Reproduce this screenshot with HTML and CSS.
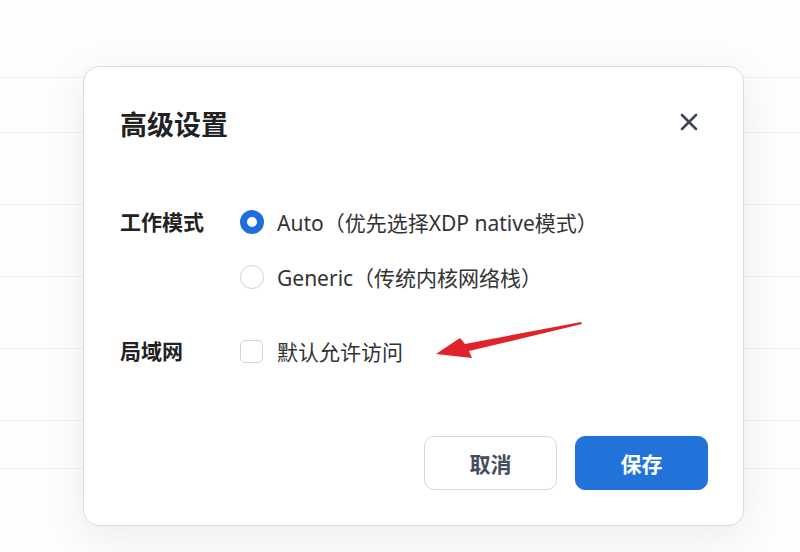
FILE: index.html
```html
<!DOCTYPE html>
<html lang="zh-CN">
<head>
    <meta charset="UTF-8">
    <meta name="viewport" content="width=device-width, initial-scale=1.0">
    <title>高级设置</title>
    <link rel="stylesheet" href="styles.css">
</head>
<body>
    <div class="table-bg">
        <div class="row row-head"></div>
        <div class="row row-sm"></div>
        <div class="row"></div>
        <div class="row"></div>
        <div class="row"></div>
        <div class="row"></div>
        <div class="row row-end"></div>
    </div>

    <div class="modal">
        <div class="modal-head">
            <h1>高级设置</h1>
            <button class="close" aria-label="关闭">
                <svg width="18" height="18" viewBox="0 0 18 18"><path d="M2 2 L16 16 M16 2 L2 16" stroke="#3d4659" stroke-width="2.6" stroke-linecap="round"/></svg>
            </button>
        </div>

        <div class="field field-mode">
            <div class="label">工作模式</div>
            <div class="options">
                <label class="option"><span class="radio checked"></span>Auto（优先选择XDP native模式）</label>
                <label class="option"><span class="radio"></span>Generic（传统内核网络栈）</label>
            </div>
        </div>

        <div class="field field-lan">
            <div class="label">局域网</div>
            <div class="options">
                <label class="option"><span class="checkbox"></span>默认允许访问</label>
            </div>
        </div>

        <div class="modal-foot">
            <button class="btn btn-cancel">取消</button>
            <button class="btn btn-save">保存</button>
        </div>

        <svg class="arrow" width="150" height="40" viewBox="0 0 150 40">
            <polygon points="146,1 147,3 34,30 37,37 1,33 25,17 30,23" fill="#e0222a"/>
        </svg>
    </div>
</body>
</html>
```

FILE: styles.css
```css
* { box-sizing: border-box; }
body { margin: 0; background: #fdfdfd; font-family: "Noto Sans", "Noto Sans CJK SC", sans-serif; color: #333; }

.table-bg { width: 800px; height: 552px; overflow: hidden; }
.row { height: 72px; border-bottom: 1px solid #efefef; }
.row-head { height: 78px; }
.row-sm { height: 55px; }
.row-end { height: 48px; }

.modal { position: absolute; left: 83px; top: 66px; width: 661px; height: 460px; padding: 36px 35px 35px 36px; background: #fff; border: 1px solid #dcdcdc; border-radius: 16px; box-shadow: 0 10px 40px rgba(0, 0, 0, 0.07); }

.modal-head { display: flex; align-items: center; justify-content: space-between; height: 40px; }
.modal-head h1 { margin: 0; font-size: 27px; font-weight: bold; color: #222; }
.close { border: 0; background: none; padding: 0; margin: 0 10px 3px 0; width: 18px; height: 18px; display: flex; cursor: pointer; }

.field { display: flex; }
.field-mode { margin-top: 67px; }
.field-lan { margin-top: 50px; }
.label { width: 120px; font-size: 21px; font-weight: bold; color: #222; line-height: 24px; }
.options { display: flex; flex-direction: column; gap: 31px; }
.option { display: flex; align-items: center; height: 24px; font-size: 21px; color: #333; }

.radio { width: 24px; height: 24px; border-radius: 50%; border: 1px solid #cfd3d8; margin-right: 13px; flex-shrink: 0; }
.radio.checked { border: 7px solid #1f6fd8; background: #fff; }
.checkbox { width: 23px; height: 23px; border-radius: 5px; border: 1px solid #cfd4da; margin-right: 14px; flex-shrink: 0; }

.modal-foot { display: flex; justify-content: flex-end; gap: 18px; margin-top: 73px; }
.btn { width: 133px; height: 54px; border-radius: 10px; font-family: inherit; font-size: 21px; font-weight: bold; cursor: pointer; }
.btn-cancel { background: #fff; border: 1px solid #d9d9d9; color: #454d5b; }
.btn-save { background: #2173d9; border: 1px solid #2173d9; color: #fff; }

.arrow { position: absolute; left: 351px; top: 254px; }
```
